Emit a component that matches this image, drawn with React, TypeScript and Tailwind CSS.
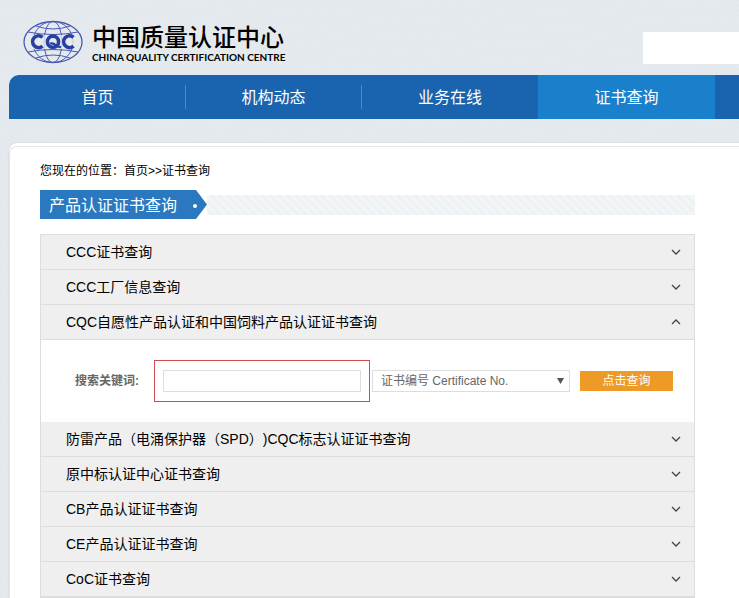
import { useState } from 'react';

const NAV = [
  { label: '首页', active: false },
  { label: '机构动态', active: false },
  { label: '业务在线', active: false },
  { label: '证书查询', active: true },
];

const SECCIONES = [
  'CCC证书查询',
  'CCC工厂信息查询',
  'CQC自愿性产品认证和中国饲料产品认证证书查询',
  '防雷产品（电涌保护器（SPD）)CQC标志认证证书查询',
  '原中标认证中心证书查询',
  'CB产品认证证书查询',
  'CE产品认证证书查询',
  'CoC证书查询',
];

function Logo() {
  return (
    <svg width="62" height="46" viewBox="0 0 62 46" className="shrink-0" aria-label="CQC">
      <g fill="none" stroke="#4a5ab2" strokeWidth="1">
        <ellipse cx="31" cy="23" rx="29" ry="20.5" strokeWidth="1.3" />
        <ellipse cx="31" cy="23" rx="20" ry="20.5" />
        <ellipse cx="31" cy="23" rx="9" ry="20.5" />
        <path d="M14 7Q31 13 48 7M6 13Q31 18 56 13M6 33Q31 28 56 33M14 39Q31 33 48 39" />
      </g>
      <path d="M8 16H54V30H8Z" fill="#e5eaef" fillOpacity="0.8" />
      {/* C Q C */}
      <g fill="none" stroke="#2b3fa3" strokeWidth="3.6">
        <path d="M20.500 18.300A5.900 5.900 0 1 0 20.500 27.100" />
        <circle cx="31" cy="22.700" r="5.600" />
        <path d="M28 24.500Q32 23.500 34 27L39 28.200" strokeWidth="2.200" />
        <path d="M51.500 18.300A5.900 5.900 0 1 0 51.500 27.100" />
      </g>
    </svg>
  );
}

function Chevron({ open }: { open: boolean }) {
  return (
    <svg width="10" height="6" viewBox="0 0 10 6" fill="none" stroke="#444" strokeWidth="1.3" className="shrink-0">
      <path d={open ? 'M1 5L5 1L9 5' : 'M1 1L5 5L9 1'} />
    </svg>
  );
}

function SearchPanel() {
  return (
    <form className="flex h-[82px] items-center bg-white pl-[34px] text-xs" onSubmit={e => e.preventDefault()}>
      <label htmlFor="keyword" className="shrink-0 font-bold text-[#666]">搜索关键词:</label>
      <div className="ml-[15px] shrink-0 border border-[#cf4b4f] px-2 py-[9px]">
        <input id="keyword" className="block h-[22px] w-[198px] border border-[#ddd] bg-white px-2 outline-none" />
      </div>
      <div className="relative ml-0.5 shrink-0">
        <select
          aria-label="Certificate"
          className="block h-[22px] w-[198px] appearance-none border border-[#ddd] bg-white pl-2 text-[#666] outline-none"
        >
          <option>证书编号 Certificate No.</option>
        </select>
        <svg width="7" height="6" viewBox="0 0 7 6" className="pointer-events-none absolute top-2 right-1.5">
          <path d="M0 0H7L3.500 6Z" fill="#555" />
        </svg>
      </div>
      <button type="submit" className="ml-2.5 h-5 w-[93px] shrink-0 bg-[#ee9a26] leading-5 text-white">
        点击查询
      </button>
    </form>
  );
}

export default function App() {
  const [abierta, setAbierta] = useState(2);

  return (
    <div className="flex min-h-screen flex-col overflow-hidden bg-[#e4e9ee] bg-[repeating-linear-gradient(35deg,#e2e8ec_0px,#e2e8ec_1px,#e6eaee_2px,#e5eaee_4px)] font-['Liberation_Sans','Noto_Sans_CJK_SC',sans-serif] text-black [text-spacing-trim:space-all]">
      {/* Header */}
      <header className="flex h-[75px] shrink-0 items-start pl-[22px]">
        <a href="#" className="mt-[19px] flex gap-2">
          <Logo />
          <span className="flex flex-col pt-1">
            <span className="text-[24px] leading-[30px] font-medium whitespace-nowrap">中国质量认证中心</span>
            <span className="font-[Lato,sans-serif] text-[10px] leading-2 font-bold whitespace-nowrap">
              CHINA QUALITY CERTIFICATION CENTRE
            </span>
          </span>
        </a>
        <input aria-label="搜索" className="mt-8 ml-auto h-8 w-24 bg-white px-2 outline-none" />
      </header>

      {/* Nav */}
      <nav className="ml-[9px] flex h-11 shrink-0 items-center rounded-tl-[10px] bg-[#1a63ae] pl-px text-base text-white">
        {NAV.map((item, i) => (
          <a
            key={item.label}
            href="#"
            className={
              item.active
                ? 'flex h-11 w-[177px] shrink-0 items-center justify-center bg-[#1b80cb] pt-0.5'
                : 'flex h-6 w-44 shrink-0 items-center justify-center pt-0.5' + (i < 2 ? ' border-r border-[#4a8ac8]' : '')
            }
          >
            {item.label}
          </a>
        ))}
      </nav>

      <main className="mt-6 ml-[9px] flex flex-1 flex-col rounded-tl-lg bg-white pt-[3px] shadow-[0_0_2px_#c4cad0]">
        <div className="flex-1 rounded-tl-lg border-t border-l border-[#e3e6e8] pr-11 pl-[30px]">
          <div className="pt-4 text-xs leading-4">
            您现在的位置：<a href="#">首页</a>&gt;&gt;<a href="#">证书查询</a>
          </div>

          <div className="mt-[11px] flex items-center">
            <h1 className="flex h-[29px] w-[167px] shrink-0 items-center justify-between bg-[#2a78bf] pt-0.5 pr-2.5 pl-[9px] text-base text-white [clip-path:polygon(0_0,156px_0,100%_50%,156px_100%,0_100%)]">
              产品认证证书查询
              <span className="size-1 rounded-full bg-white" />
            </h1>
            <div className="h-5 flex-1 bg-[repeating-linear-gradient(45deg,#f3f5f7_0px,#f3f5f7_3px,#edf2f5_3px,#edf2f5_6px)]" />
          </div>

          <div className="mt-[15px] border border-[#ddd]">
            {SECCIONES.map((titulo, i) => (
              <section key={titulo}>
                <button
                  type="button"
                  aria-expanded={abierta === i}
                  onClick={() => setAbierta(abierta === i ? -1 : i)}
                  className="flex h-[35px] w-full items-center justify-between border-b border-[#ddd] bg-[#efefef] pr-[13px] pl-[25px] text-left text-sm"
                >
                  {titulo}
                  <Chevron open={abierta === i} />
                </button>
                {abierta === i && <SearchPanel />}
              </section>
            ))}
          </div>
        </div>
      </main>
    </div>
  );
}
